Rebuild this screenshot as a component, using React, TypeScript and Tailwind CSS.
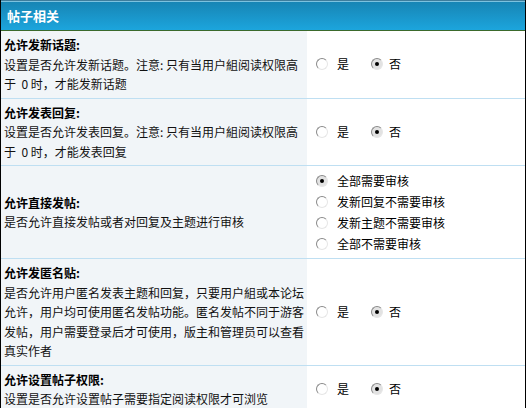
import React from "react";

type Option = { label: string; checked?: boolean };

interface Setting {
  title: string;
  lines: string[];
  options: Option[];
  stacked?: boolean;
}

const yesNo: Option[] = [{ label: "是" }, { label: "否", checked: true }];

const settings: Setting[] = [
  {
    title: "允许发新话题:",
    lines: ["设置是否允许发新话题。注意: 只有当用户組阅读权限高", "于  0 时，才能发新话题"],
    options: yesNo,
  },
  {
    title: "允许发表回复:",
    lines: ["设置是否允许发表回复。注意: 只有当用户組阅读权限高", "于  0 时，才能发表回复"],
    options: yesNo,
  },
  {
    title: "允许直接发帖:",
    lines: ["是否允许直接发帖或者对回复及主题进行审核"],
    options: [
      { label: "全部需要审核", checked: true },
      { label: "发新回复不需要审核" },
      { label: "发新主题不需要审核" },
      { label: "全部不需要审核" },
    ],
    stacked: true,
  },
  {
    title: "允许发匿名贴:",
    lines: [
      "是否允许用户匿名发表主题和回复，只要用户組或本论坛",
      "允许，用户均可使用匿名发帖功能。匿名发帖不同于游客",
      "发帖，用户需要登录后才可使用，版主和管理员可以查看",
      "真实作者",
    ],
    options: yesNo,
  },
  {
    title: "允许设置帖子权限:",
    lines: ["设置是否允许设置帖子需要指定阅读权限才可浏览"],
    options: yesNo,
  },
];

function Radio({ checked }: { checked?: boolean }) {
  return (
    <span
      className={
        "relative inline-block w-[12px] h-[12px] rounded-full border border-t-[#8a8a8a] border-l-[#8a8a8a] border-r-[#e6e6e6] border-b-[#e6e6e6] " +
        (checked ? "bg-[#e2e2e2]" : "bg-white")
      }
    >
      {checked && (
        <span className="absolute left-[3px] top-[3px] w-[4px] h-[4px] rounded-full bg-black" />
      )}
    </span>
  );
}

function SettingRow({ s }: { s: Setting }) {
  return (
    <div className="flex border-b border-[#bfdff2]">
      <div className="w-[306px] shrink-0 bg-[#f1f5f8] pl-[3px] py-[4px] flex flex-col justify-center leading-[19.5px]">
        <div className="font-bold text-black">{s.title}</div>
        {s.lines.map((l, i) => (
          <div key={i} className="whitespace-pre text-[#111]">
            {l}
          </div>
        ))}
      </div>
      <div className="flex-1 bg-white pl-[9px] py-[4px] flex items-center">
        {s.stacked ? (
          <div className="flex flex-col">
            {s.options.map((o) => (
              <label key={o.label} className="flex items-center gap-[9px] h-[21px]">
                <Radio checked={o.checked} />
                <span>{o.label}</span>
              </label>
            ))}
          </div>
        ) : (
          <div className="flex items-center">
            <label className="flex items-center gap-[9px] mr-[22px]">
              <Radio checked={s.options[0].checked} />
              <span>{s.options[0].label}</span>
            </label>
            <label className="flex items-center gap-[6px]">
              <Radio checked={s.options[1].checked} />
              <span>{s.options[1].label}</span>
            </label>
          </div>
        )}
      </div>
    </div>
  );
}

export default function App() {
  return (
    <div
      className="w-[526px] h-[408px] overflow-hidden bg-white text-[12px] text-black"
      style={{ fontFamily: '"SimSun", "Noto Sans CJK SC", sans-serif' }}
    >
      <div className="border-x border-black h-full">
        <div className="h-[31px] border-t border-[#3e7d9c] border-b border-b-[#3b6a2c] bg-gradient-to-b from-[#1784b3] to-[#1ca5dd] shadow-[inset_0_1px_0_#7cc2df] flex items-center pl-[6px]">
          <span className="text-white font-bold text-[13px]">帖子相关</span>
        </div>
        {settings.map((s) => (
          <SettingRow key={s.title} s={s} />
        ))}
      </div>
    </div>
  );
}
